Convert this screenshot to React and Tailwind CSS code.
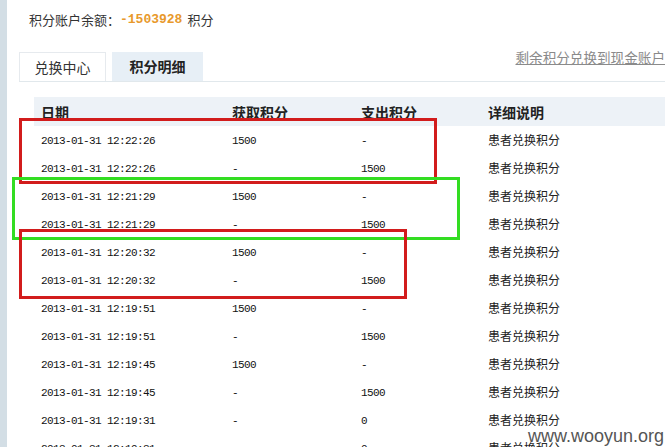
import React from 'react';

const cjk = { fontFamily: '"Noto Sans CJK SC", "Liberation Sans", sans-serif' };

// 积分明细数据
const rows = [
    ['2013-01-31 12:22:26', '1500', '-'],
    ['2013-01-31 12:22:26', '-', '1500'],
    ['2013-01-31 12:21:29', '1500', '-'],
    ['2013-01-31 12:21:29', '-', '1500'],
    ['2013-01-31 12:20:32', '1500', '-'],
    ['2013-01-31 12:20:32', '-', '1500'],
    ['2013-01-31 12:19:51', '1500', '-'],
    ['2013-01-31 12:19:51', '-', '1500'],
    ['2013-01-31 12:19:45', '1500', '-'],
    ['2013-01-31 12:19:45', '-', '1500'],
    ['2013-01-31 12:19:31', '-', '0'],
    ['2013-01-31 12:19:31', '-', '0'],
];

const Row = ({ row }) => (
    <div className="flex h-[28px] items-center text-[#111]">
        <div className="w-[198px] pl-[7px] pt-[2px] font-['Liberation_Mono',monospace] text-[11px] tracking-[-0.6px]">{row[0]}</div>
        <div className="w-[129px] pt-[2px] font-['Liberation_Mono',monospace] text-[11px] tracking-[-0.6px]">{row[1]}</div>
        <div className="w-[127px] pt-[2px] font-['Liberation_Mono',monospace] text-[11px] tracking-[-0.6px]">{row[2]}</div>
        <div className="flex-1 text-[12px] text-[#222]" style={cjk}>患者兑换积分</div>
    </div>
);

export default function App() {
    return (
        <div className="relative flex h-[447px] w-[665px] overflow-hidden bg-white" style={cjk}>
            <div className="w-[7px] shrink-0 bg-[#d3dee5]" />
            <div className="flex-1 pl-[12px]">
                {/* 余额 */}
                <div className="flex h-[40px] items-center pl-[10px] text-[13px] text-[#333]">
                    <span>积分账户余额：</span>
                    <span className="font-['Liberation_Mono',monospace] font-bold text-[#e8992c]">-1503928</span>
                    <span className="ml-[5px]">积分</span>
                </div>

                {/* 标签 */}
                <div className="mt-[12px] flex h-[30px] items-end border-b border-[#e1e8ec]">
                    <div className="flex h-[29px] w-[87px] items-center justify-center border border-b-0 border-[#e6eaee] text-[14px] text-[#333]">兑换中心</div>
                    <div className="ml-[6px] flex h-[29px] w-[91px] items-center justify-center bg-[#e7eff6] text-[14px] font-bold text-[#222]">积分明细</div>
                    <a className="-mt-[5px] ml-auto self-start whitespace-nowrap text-[13.6px] leading-[20px] text-[#8a8a8a] underline">剩余积分兑换到现金账户</a>
                </div>

                {/* 表格 */}
                <div className="ml-[15px] mt-[15px]">
                    <div className="flex h-[29px] items-center bg-[#edf2f7] pt-[1px] text-[14px] font-bold text-[#222]">
                        <div className="w-[198px] pl-[7px]">日期</div>
                        <div className="w-[129px]">获取积分</div>
                        <div className="w-[127px]">支出积分</div>
                        <div className="flex-1">详细说明</div>
                    </div>
                    {rows.map((row, i) => (
                        <Row key={i} row={row} />
                    ))}
                </div>
            </div>

            {/* 标注框 */}
            <div className="absolute left-[19px] top-[118px] h-[66px] w-[418px] border-[3px] border-[#d21c1c]" />
            <div className="absolute left-[12px] top-[177px] h-[63px] w-[448px] border-[3px] border-[#33dd22]" />
            <div className="absolute left-[19px] top-[229px] h-[70px] w-[388px] border-[3px] border-[#d21c1c]" />

            {/* 水印 */}
            <div className="absolute left-[528px] top-[426px] font-['Liberation_Sans',sans-serif] text-[18px] leading-[20px] text-[#555] [text-shadow:0_0_2px_#fff,0_0_2px_#fff]">www.wooyun.org</div>
        </div>
    );
}
